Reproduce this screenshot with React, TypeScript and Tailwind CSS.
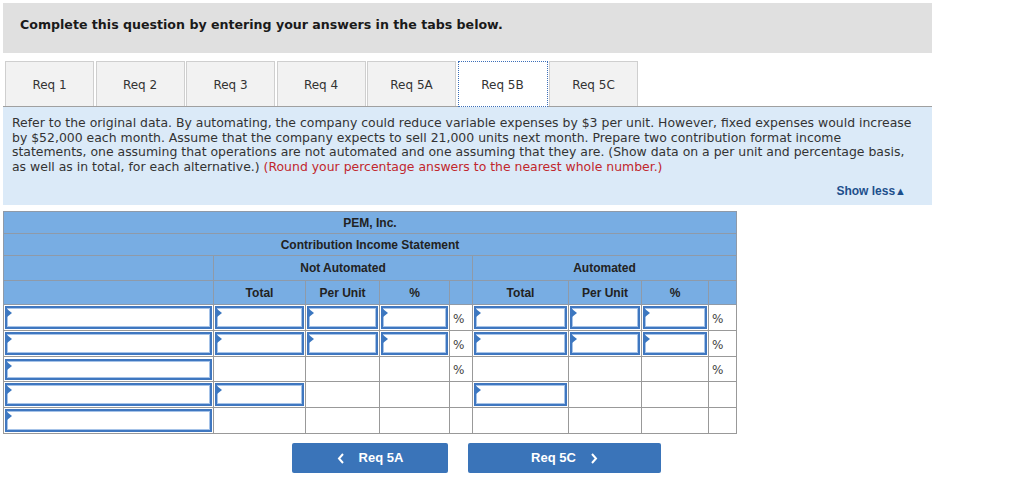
import React from "react";

const verdana = { fontFamily: '"DejaVu Sans", Verdana, sans-serif' };
const arial = { fontFamily: '"Liberation Sans", Arial, sans-serif' };

function Inp({ h }: { h: number }) {
  return (
    <div
      className="relative w-full border-2 border-[#3f77c0] bg-white shadow-[inset_0_0_0_1px_#a6c3e8]"
      style={{ height: h }}
    >
      <span className="absolute left-0 top-[1px] h-0 w-0 border-y-[4px] border-l-[5px] border-y-transparent border-l-[#3b77c0]" />
    </div>
  );
}

type Cell = "i" | "p" | "e";

const rows: { h: number; cells: Cell[]; topBlack?: boolean[] }[] = [
  { h: 26, cells: ["i", "i", "i", "i", "p", "i", "i", "i", "p"] },
  { h: 26, cells: ["i", "i", "i", "i", "p", "i", "i", "i", "p"] },
  {
    h: 24,
    cells: ["i", "e", "e", "e", "p", "e", "e", "e", "p"],
    topBlack: [false, true, true, true, true, true, true, true, true],
  },
  {
    h: 26,
    cells: ["i", "i", "e", "e", "e", "i", "e", "e", "e"],
    topBlack: [false, false, true, true, true, false, true, true, true],
  },
  { h: 26, cells: ["i", "e", "e", "e", "e", "e", "e", "e", "e"] },
];

const widths = [210, 92, 74, 70, 23, 96, 73, 67, 28];

export default function App() {
  const tabs = ["Req 1", "Req 2", "Req 3", "Req 4", "Req 5A", "Req 5B", "Req 5C"];
  return (
    <div className="h-[490px] w-[1024px] overflow-hidden bg-white pl-[3px] pt-[3px] text-[#333]" style={verdana}>
      <div className="w-[929px]">
        <div className="h-[50px] bg-[#e0e0e0] pl-[17px] pt-[13px] text-[12.6px] font-bold text-[#1a1a1a]">
          Complete this question by entering your answers in the tabs below.
        </div>

        <div className="mt-[8px] flex h-[45px] gap-[1.5px] pl-[2px]">
          {tabs.map((t) =>
            t === "Req 5B" ? (
              <div
                key={t}
                className="relative z-10 flex h-[46px] w-[90px] items-center justify-center border border-dotted border-[#3d6fb8] bg-white pt-[2px] text-[12px] text-[#333]"
              >
                {t}
              </div>
            ) : (
              <div
                key={t}
                className="flex h-[45px] w-[89px] items-center justify-center border border-b-0 border-[#cfcfcf] bg-[#f2f2f2] pt-[2px] text-[12px] text-[#333]"
              >
                {t}
              </div>
            )
          )}
        </div>

        <div className="h-[99px] border-t border-[#a0a0a0] bg-[#dbeaf8] pl-[9px] pr-[20px] pt-[9px]">
          <p className="whitespace-nowrap text-[12.45px] leading-[14.6px] text-[#333]">
            Refer to the original data. By automating, the company could reduce variable expenses by $3 per unit. However, fixed expenses would increase
            <br />
            by $52,000 each month. Assume that the company expects to sell 21,000 units next month. Prepare two contribution format income
            <br />
            statements, one assuming that operations are not automated and one assuming that they are. (Show data on a per unit and percentage basis,
            <br />
            as well as in total, for each alternative.){" "}
            <span className="text-[#c1272d]">(Round your percentage answers to the nearest whole number.)</span>
          </p>
          <div className="mt-[8px] flex justify-end pr-[6px]">
            <span className="text-[12px] font-bold text-[#1d4f8c]" style={arial}>
              Show less<span className="text-[11px]">▲</span>
            </span>
          </div>
        </div>
      </div>

      <table className="mt-[6px] w-[733px] table-fixed border-collapse" style={arial}>
        <colgroup>
          {widths.map((w, i) => (
            <col key={i} style={{ width: w }} />
          ))}
        </colgroup>
        <thead>
          <tr className="h-[22px] bg-[#78ade3]">
            <th colSpan={9} className="border border-[#8f9aa8] text-center text-[12px] font-bold text-[#222]">
              PEM, Inc.
            </th>
          </tr>
          <tr className="h-[22px] bg-[#78ade3]">
            <th colSpan={9} className="border border-[#8f9aa8] text-center text-[12px] font-bold text-[#222]">
              Contribution Income Statement
            </th>
          </tr>
          <tr className="h-[25px] bg-[#78ade3]">
            <th className="border border-[#8f9aa8]" />
            <th colSpan={4} className="border border-[#8f9aa8] text-center text-[12px] font-bold text-[#222]">
              Not Automated
            </th>
            <th colSpan={4} className="border border-[#8f9aa8] text-center text-[12px] font-bold text-[#222]">
              Automated
            </th>
          </tr>
          <tr className="h-[24px] bg-[#78ade3]">
            {["", "Total", "Per Unit", "%", "", "Total", "Per Unit", "%", ""].map((h, i) => (
              <th key={i} className="border border-[#8f9aa8] text-center text-[12px] font-bold text-[#222]">
                {h}
              </th>
            ))}
          </tr>
        </thead>
        <tbody>
          {rows.map((r, ri) => (
            <tr key={ri} style={{ height: r.h }}>
              {r.cells.map((c, ci) => (
                <td
                  key={ci}
                  className={`border border-[#999] ${r.topBlack && r.topBlack[ci] ? "border-t-[#111]" : ""} ${
                    c === "i" ? "p-[1px]" : "p-0"
                  }`}
                >
                  {c === "i" ? (
                    <Inp h={r.h - 3} />
                  ) : c === "p" ? (
                    <span className="pl-[3px] text-[12px] text-[#444]" style={verdana}>
                      %
                    </span>
                  ) : null}
                </td>
              ))}
            </tr>
          ))}
        </tbody>
      </table>

      <div className="ml-[289px] mt-[9px] flex gap-[20px]" style={arial}>
        <div className="flex h-[30px] w-[156px] items-center justify-center gap-[14px] rounded-[2px] bg-[#3a74b9] text-[13px] font-bold text-white">
          <svg width="8" height="11" viewBox="0 0 8 11" fill="none" stroke="white" strokeWidth="2">
            <path d="M6 1 L2 5.5 L6 10" />
          </svg>
          <span>Req 5A</span>
        </div>
        <div className="flex h-[30px] w-[193px] items-center justify-center gap-[14px] rounded-[2px] bg-[#3a74b9] text-[13px] font-bold text-white">
          <span>Req 5C</span>
          <svg width="8" height="11" viewBox="0 0 8 11" fill="none" stroke="white" strokeWidth="2">
            <path d="M2 1 L6 5.5 L2 10" />
          </svg>
        </div>
      </div>
    </div>
  );
}
